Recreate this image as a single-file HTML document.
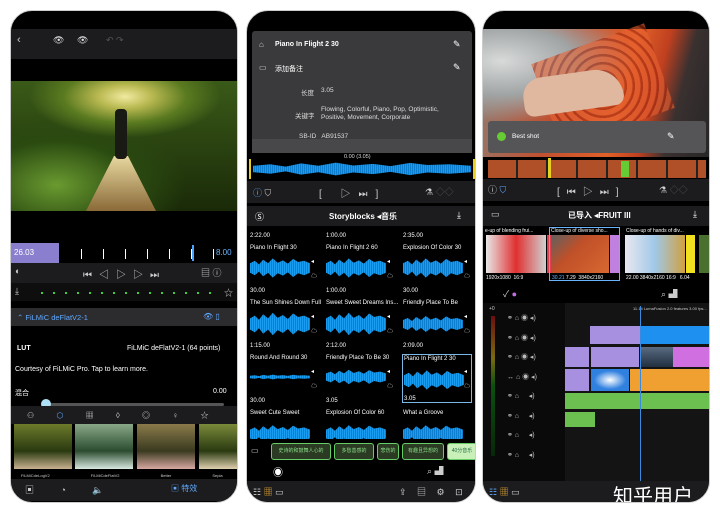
<!DOCTYPE html>
<html><head><meta charset="utf-8"><style>
*{margin:0;padding:0;box-sizing:border-box}
body{width:720px;height:513px;background:#fff;position:relative;overflow:hidden;font-family:"Liberation Sans","Noto Sans CJK SC",sans-serif;color:#fff}
.a{position:absolute}
.ph{position:absolute;top:10px;height:493px;background:#000;border-radius:22px;overflow:hidden;border:1px solid #ccc}
.t{font-size:6px;white-space:nowrap}
.wf{position:absolute;background:repeating-linear-gradient(90deg,#1a9cf0 0 1px,#0c7fd0 1px 2px);clip-path:polygon(0 30%,8% 20%,15% 35%,22% 15%,30% 30%,38% 10%,46% 28%,55% 18%,63% 32%,72% 12%,80% 25%,90% 20%,100% 30%,100% 70%,90% 80%,80% 72%,72% 88%,63% 68%,55% 82%,46% 72%,38% 90%,30% 70%,22% 85%,15% 65%,8% 80%,0 70%)}
.tag{position:absolute;top:432px;height:17px;border:1px solid #6c6;border-radius:3px;background:#2b3a22;color:#8d8;font-size:5px;text-align:center;line-height:15px}
</style></head><body>

<!-- PHONE 1 -->
<div class="ph" style="left:10px;width:228px">
 <div class="a" style="left:0;top:18px;width:228px;height:30px;background:#1c1c1e"></div>
 <div class="a t" style="left:6px;top:23px;font-size:11px;color:#ccc">‹</div>
 <div class="a t" style="left:42px;top:24px;font-size:9px;color:#ddd">👁</div>
 <div class="a t" style="left:66px;top:24px;font-size:9px;color:#ddd">👁</div>
 <div class="a t" style="left:95px;top:24px;font-size:9px;color:#555">↶ ↷</div>
 <div class="a" style="left:0;top:70px;width:228px;height:130px;background:radial-gradient(ellipse 60% 45% at 50% 12%,#f0eaa0 0,#b8b850 20%,#5a7a20 45%,transparent 70%),radial-gradient(ellipse at 20% 80%,#6a9a30 0,#2a4a10 30%,transparent 50%),linear-gradient(#3a5a18,#1a2a08)"></div>
 <div class="a" style="left:75px;top:145px;width:70px;height:55px;background:linear-gradient(#e8d8a0,#8a6a38);clip-path:polygon(40% 0,60% 0,100% 100%,0 100%)"></div>
 <div class="a" style="left:104px;top:98px;width:12px;height:50px;background:#1a1a14;border-radius:4px"></div>
 <div class="a" style="left:0;top:232px;width:48px;height:20px;background:#8a7fcf"></div>
 <div class="a t" style="left:3px;top:237px;font-size:8px;color:#fff">26.03</div>
 <div class="a" style="left:70px;top:238px;width:150px;height:10px;background:repeating-linear-gradient(90deg,#fff 0 1px,transparent 1px 22px)"></div>
 <div class="a" style="left:181px;top:234px;width:2px;height:16px;background:#4aa3ff"></div>
 <div class="a t" style="left:205px;top:237px;font-size:8px;color:#6ab4ff">8.00</div>
 <div class="a" style="left:0;top:252px;width:228px;height:20px;background:#1c1c1e"></div>
 <div class="a t" style="left:4px;top:255px;font-size:9px;color:#ccc">◐</div>
 <div class="a t" style="left:72px;top:255px;font-size:10px;color:#ccc;letter-spacing:7px">⏮◁▷▷⏭</div>
 <div class="a t" style="left:190px;top:255px;font-size:9px;color:#ccc">▤ ⓘ</div>
 <div class="a" style="left:0;top:272px;width:228px;height:18px;background:#0e0e0e"></div>
 <div class="a t" style="left:4px;top:275px;font-size:9px;color:#ccc">⤓</div>
 <div class="a" style="left:30px;top:281px;width:180px;height:2px;background:repeating-linear-gradient(90deg,#4c4 0 2px,transparent 2px 12px)"></div>
 <div class="a t" style="left:213px;top:275px;font-size:9px;color:#ccc">☆</div>
 <div class="a" style="left:0;top:297px;width:228px;height:18px;background:#2c2c2e"></div>
 <div class="a t" style="left:6px;top:302px;font-size:7.5px;color:#5fa8ff">⌃ FiLMiC deFlatV2-1</div>
 <div class="a t" style="left:192px;top:301px;font-size:8px;color:#5fa8ff">👁 ▯</div>
 <div class="a t" style="left:6px;top:334px;font-size:7px;font-weight:bold">LUT</div>
 <div class="a t" style="left:116px;top:334px;font-size:7px">FiLMiC deFlatV2-1 (64 points)</div>
 <div class="a t" style="left:4px;top:355px;font-size:7px">Courtesy of FiLMiC Pro. Tap to learn more.</div>
 <div class="a t" style="left:4px;top:377px;font-size:7px">混合</div>
 <div class="a t" style="left:202px;top:377px;font-size:7px">0.00</div>
 <div class="a" style="left:35px;top:392px;width:178px;height:3px;background:#555;border-radius:2px"></div>
 <div class="a" style="left:30px;top:388px;width:10px;height:10px;background:#aee0f5;border-radius:50%"></div>
 <div class="a" style="left:0;top:395px;width:228px;height:18px;background:#1c1c1e"></div>
 <div class="a t" style="left:16px;top:399px;font-size:8px;color:#ccc;word-spacing:20px">⚇ <span style="color:#5fa8ff">⬡</span> ▦ ◊ ◎ ♀ ☆</div>
 <div class="a" style="left:3px;top:413px;width:58px;height:45px;background:linear-gradient(#6c7a2a,#2a3a10 60%,#c8b090)"></div>
 <div class="a" style="left:64px;top:413px;width:58px;height:45px;background:linear-gradient(#88a888,#2c4c30 60%,#d8e8e0)"></div>
 <div class="a" style="left:126px;top:413px;width:58px;height:45px;background:linear-gradient(#8a7a4a,#3a3a20 60%,#d8a8a0)"></div>
 <div class="a" style="left:188px;top:413px;width:40px;height:45px;background:linear-gradient(#7a8a3a,#2a3a10 60%,#e0d0b0)"></div>
 <div class="a t" style="left:10px;top:462px;font-size:4px;color:#ccc;word-spacing:40px">FiLMiCdeLogV2 FiLMiCdeFlatV2 Better&nbsp;Sepia Color&nbsp;Punch</div>
 <div class="a" style="left:0;top:468px;width:228px;height:22px;background:#1c1c1e"></div>
 <div class="a t" style="left:14px;top:472px;font-size:9px;color:#ccc;word-spacing:24px">▣ ◔ 🔈</div>
 <div class="a t" style="left:160px;top:472px;font-size:8px;color:#5fa8ff">▣ 特效</div>
</div>

<!-- PHONE 2 -->
<div class="ph" style="left:246px;width:230px">
 <div class="a" style="left:5px;top:20px;width:220px;height:122px;background:#3a3a3c;border-radius:3px"></div>
 <div class="a t" style="left:12px;top:29px;font-size:8px;color:#ccc">⌂</div>
 <div class="a t" style="left:28px;top:30px;font-size:7px;font-weight:bold">Piano In Flight 2 30</div>
 <div class="a t" style="left:206px;top:28px;font-size:9px">✎</div>
 <div class="a t" style="left:12px;top:52px;font-size:8px;color:#ccc">▭</div>
 <div class="a t" style="left:28px;top:53px;font-size:7px">添加备注</div>
 <div class="a t" style="left:206px;top:51px;font-size:9px">✎</div>
 <div class="a t" style="left:54px;top:76px;font-size:6.5px;color:#ddd">长度</div>
 <div class="a t" style="left:74px;top:76px;font-size:6.5px;color:#ddd">3.05</div>
 <div class="a t" style="left:48px;top:99px;font-size:6.5px;color:#ddd">关键字</div>
 <div class="a t" style="left:74px;top:95px;font-size:6.5px;color:#ddd;line-height:8px">Flowing, Colorful, Piano, Pop, Optimistic,<br>Positive, Movement, Corporate</div>
 <div class="a t" style="left:52px;top:122px;font-size:6.5px;color:#ddd">SB-ID&nbsp;&nbsp; AB91537</div>
 <div class="a" style="left:5px;top:128px;width:220px;height:14px;background:#48484a"></div>
 <div class="a t" style="left:97px;top:143px;font-size:5.5px;color:#ddd">0.00 (3.05)</div>
 <div class="a" style="left:2px;top:148px;width:226px;height:20px;border:2px solid #e8d020;border-top:none;border-bottom:none"></div>
 <div class="a wf" style="left:6px;top:150px;width:218px;height:16px"></div>
 <div class="a" style="left:0;top:170px;width:230px;height:22px;background:#1c1c1e"></div>
 <div class="a t" style="left:6px;top:175px;font-size:9px;color:#5fa8ff">ⓘ <span style="color:#ccc">⛉</span></div>
 <div class="a t" style="left:72px;top:174px;font-size:10px;color:#ccc;letter-spacing:8px">[ ▷⏭]</div>
 <div class="a t" style="left:178px;top:174px;font-size:9px;color:#ccc">⚗ <span style="color:#555">◇◇</span></div>
 <div class="a" style="left:0;top:195px;width:230px;height:20px;background:#1c1c1e"></div>
 <div class="a t" style="left:8px;top:199px;font-size:9px">Ⓢ</div>
 <div class="a t" style="left:82px;top:200px;font-size:8px;font-weight:bold">Storyblocks ◂音乐</div>
 <div class="a t" style="left:210px;top:199px;font-size:9px">⤓</div>

 <div class="a" style="left:0;top:217px;width:230px;height:212px">
  <div class="a t" style="left:3px;top:5px">2:22.00</div><div class="a t" style="left:3px;top:17px">Piano In Flight 30</div>
  <div class="a wf" style="left:3px;top:28px;width:60px;height:24px"></div><div class="a t" style="left:64px;top:30px;font-size:6px">◂<br><br>☁</div>
  <div class="a t" style="left:79px;top:5px">1:00.00</div><div class="a t" style="left:79px;top:17px">Piano In Flight 2 60</div>
  <div class="a wf" style="left:79px;top:28px;width:60px;height:24px"></div><div class="a t" style="left:140px;top:30px;font-size:6px">◂<br><br>☁</div>
  <div class="a t" style="left:156px;top:5px">2:35.00</div><div class="a t" style="left:156px;top:17px">Explosion Of Color 30</div>
  <div class="a wf" style="left:156px;top:28px;width:60px;height:24px"></div><div class="a t" style="left:217px;top:30px;font-size:6px">◂<br><br>☁</div>

  <div class="a t" style="left:3px;top:60px">30.00</div><div class="a t" style="left:3px;top:72px">The Sun Shines Down Full</div>
  <div class="a wf" style="left:3px;top:82px;width:60px;height:28px"></div><div class="a t" style="left:64px;top:85px;font-size:6px">◂<br><br>☁</div>
  <div class="a t" style="left:79px;top:60px">1:00.00</div><div class="a t" style="left:79px;top:72px">Sweet Sweet Dreams Ins...</div>
  <div class="a wf" style="left:79px;top:82px;width:60px;height:28px"></div><div class="a t" style="left:140px;top:85px;font-size:6px">◂<br><br>☁</div>
  <div class="a t" style="left:156px;top:60px">30.00</div><div class="a t" style="left:156px;top:72px">Friendly Place To Be</div>
  <div class="a wf" style="left:156px;top:86px;width:60px;height:20px"></div><div class="a t" style="left:217px;top:85px;font-size:6px">◂<br><br>☁</div>

  <div class="a t" style="left:3px;top:115px">1:15.00</div><div class="a t" style="left:3px;top:127px">Round And Round 30</div>
  <div class="a wf" style="left:3px;top:146px;width:60px;height:6px"></div><div class="a t" style="left:64px;top:140px;font-size:6px">◂<br><br>☁</div>
  <div class="a t" style="left:79px;top:115px">2:12.00</div><div class="a t" style="left:79px;top:127px">Friendly Place To Be 30</div>
  <div class="a wf" style="left:79px;top:140px;width:60px;height:18px"></div><div class="a t" style="left:140px;top:140px;font-size:6px">◂<br><br>☁</div>
  <div class="a t" style="left:156px;top:115px">2:09.00</div>
  <div class="a" style="left:155px;top:126px;width:70px;height:49px;border:1px solid #7ab8e8"></div>
  <div class="a t" style="left:157px;top:128px">Piano In Flight 2 30</div>
  <div class="a wf" style="left:157px;top:140px;width:60px;height:24px"></div><div class="a t" style="left:217px;top:140px;font-size:6px">◂<br><br>☁</div>
  <div class="a t" style="left:157px;top:168px">3.05</div>

  <div class="a t" style="left:3px;top:170px">30.00</div><div class="a t" style="left:3px;top:182px">Sweet Cute Sweet</div>
  <div class="a wf" style="left:3px;top:195px;width:60px;height:22px"></div>
  <div class="a t" style="left:79px;top:170px">3.05</div><div class="a t" style="left:79px;top:182px">Explosion Of Color 60</div>
  <div class="a wf" style="left:79px;top:195px;width:60px;height:22px"></div>
  <div class="a t" style="left:156px;top:182px">What a Groove</div>
  <div class="a wf" style="left:156px;top:195px;width:60px;height:22px"></div>
 </div>
 <div class="a" style="left:0;top:428px;width:230px;height:62px;background:#000"></div>
 <div class="a t" style="left:4px;top:435px;font-size:8px;color:#ccc">▭</div>
 <div class="tag" style="left:24px;width:60px">史诗的和鼓舞人心的</div>
 <div class="tag" style="left:87px;width:40px">多愁善感的</div>
 <div class="tag" style="left:130px;width:22px">悲伤的</div>
 <div class="tag" style="left:155px;width:42px">有趣且异想的</div>
 <div class="tag" style="left:200px;width:30px;background:#c8f0b8;color:#264">40分音乐</div>
 <div class="a t" style="left:26px;top:453px;font-size:10px">◉</div>
 <div class="a t" style="left:180px;top:453px;font-size:9px;color:#ccc">⌕ ▟</div>
 <div class="a" style="left:0;top:470px;width:230px;height:22px;background:#1c1c1e"></div>
 <div class="a t" style="left:6px;top:474px;font-size:9px;color:#ccc">☷ <span style="color:#d9a030">▦</span> ▭</div>
 <div class="a t" style="left:152px;top:474px;font-size:9px;color:#ccc;word-spacing:8px">⇪ ▤ ⚙ ⊡</div>
</div>

<!-- PHONE 3 -->
<div class="ph" style="left:482px;width:228px">
 <div class="a" style="left:0;top:18px;width:228px;height:128px;background:radial-gradient(ellipse at 8% 25%,#d8dada 0,#a0a4a4 25%,transparent 45%),linear-gradient(105deg,#8a8078 0,#c05030 35%,#e06028 60%,#c04020 72%,#3a3030 82%,#262626 100%)"></div>
 <div class="a" style="left:60px;top:30px;width:120px;height:90px;background:repeating-radial-gradient(circle at 50% 50%,#e86030 0 5px,#a02810 6px 8px);opacity:.6;transform:rotate(-20deg)"></div>
 <div class="a" style="left:40px;top:62px;width:100px;height:38px;background:#e0b8a0;border-radius:20px 30px 10px 10px;transform:rotate(-8deg)"></div>
 <div class="a" style="left:5px;top:110px;width:218px;height:32px;background:#555557;border-radius:3px"></div>
 <div class="a" style="left:14px;top:121px;width:9px;height:9px;border-radius:50%;background:#6c3"></div>
 <div class="a t" style="left:29px;top:122px;font-size:6.5px">Best shot</div>
 <div class="a t" style="left:184px;top:120px;font-size:9px">✎</div>
 <div class="a" style="left:5px;top:149px;width:218px;height:18px;background:repeating-linear-gradient(90deg,#b05028 0 28px,#222 28px 30px)"></div>
 <div class="a" style="left:65px;top:147px;width:3px;height:20px;background:#e8d020"></div>
 <div class="a" style="left:138px;top:150px;width:8px;height:16px;background:#6c3"></div>
 <div class="a" style="left:0;top:168px;width:228px;height:22px;background:#1c1c1e"></div>
 <div class="a t" style="left:5px;top:172px;font-size:9px;color:#ccc">ⓘ <span style="color:#5fa8ff">⛉</span></div>
 <div class="a t" style="left:74px;top:172px;font-size:10px;color:#ccc;letter-spacing:7px">[⏮▷⏭]</div>
 <div class="a t" style="left:176px;top:172px;font-size:9px;color:#ccc">⚗ <span style="color:#555">◇◇</span></div>
 <div class="a" style="left:0;top:195px;width:228px;height:20px;background:#1c1c1e"></div>
 <div class="a t" style="left:8px;top:198px;font-size:9px;color:#ccc">▭</div>
 <div class="a t" style="left:85px;top:199px;font-size:8px;font-weight:bold">已导入 ◂FRUIT III</div>
 <div class="a t" style="left:210px;top:198px;font-size:9px">⤓</div>
 <div class="a t" style="left:2px;top:217px;font-size:5px">e-up of blending frui...</div>
 <div class="a" style="left:3px;top:224px;width:60px;height:38px;background:linear-gradient(90deg,#e8e8e8,#e03030 50%,#d0d0d0)"></div>
 <div class="a" style="left:64px;top:224px;width:9px;height:38px;background:#e04050"></div>
 <div class="a" style="left:66px;top:216px;width:71px;height:54px;border:1px solid #6ab4ff"></div>
 <div class="a t" style="left:68px;top:217px;font-size:5px">Close-up of diverse sho...</div>
 <div class="a" style="left:68px;top:224px;width:58px;height:38px;background:linear-gradient(135deg,#606060,#c05028 40%,#d86830)"></div>
 <div class="a" style="left:127px;top:224px;width:9px;height:38px;background:#c080e0"></div>
 <div class="a t" style="left:143px;top:217px;font-size:5px">Close-up of hands of div...</div>
 <div class="a" style="left:142px;top:224px;width:60px;height:38px;background:linear-gradient(90deg,#e8e8f0,#a0c8e8 50%,#d0a040)"></div>
 <div class="a" style="left:203px;top:224px;width:9px;height:38px;background:#f0e020"></div>
 <div class="a" style="left:216px;top:224px;width:12px;height:38px;background:#4a7030"></div>
 <div class="a t" style="left:3px;top:264px;font-size:5px">1920x1080&nbsp; 16:9</div>
 <div class="a t" style="left:69px;top:264px;font-size:5px"><span style="color:#6ab4ff">30.21</span> 7.29 &nbsp;3840x2160</div>
 <div class="a t" style="left:143px;top:264px;font-size:5px">22.00 3840x2160 16:9 &nbsp;&nbsp;6.04</div>
 <div class="a t" style="left:20px;top:276px;font-size:9px;color:#ccc">✓ <span style="color:#c070e0">●</span></div>
 <div class="a t" style="left:178px;top:276px;font-size:9px;color:#ccc">⌕ ▟</div>
 <div class="a" style="left:0;top:292px;width:228px;height:178px;background:#141414"></div>
 <div class="a" style="left:0;top:292px;width:82px;height:178px;background:#0a0a0a"></div>
 <div class="a" style="left:8px;top:305px;width:4px;height:140px;background:linear-gradient(#6a1010,#7a6a10 30%,#0c5010 50%,#082808)"></div>
 <div class="a t" style="left:6px;top:295px;font-size:5px;color:#ccc">+0</div>
 <div class="a t" style="left:24px;top:298px;font-size:7px;color:#bbb;line-height:19.5px">⚭ ⌂ ◉ ◂)<br>⚭ ⌂ ◉ ◂)<br>⚭ ⌂ ◉ ◂)<br>↔ ⌂ ◉ ◂)<br>⚭ ⌂ &nbsp;&nbsp;&nbsp; ◂)<br>⚭ ⌂ &nbsp;&nbsp;&nbsp; ◂)<br>⚭ ⌂ &nbsp;&nbsp;&nbsp; ◂)<br>⚭ ⌂ &nbsp;&nbsp;&nbsp; ◂)</div>
 <div class="a t" style="left:150px;top:295px;font-size:4px;color:#ccc">11.14 LumaFusion 2.0 features 3.00 fps...</div>
 <div class="a" style="left:107px;top:315px;width:50px;height:18px;background:#a890e0"></div>
 <div class="a" style="left:157px;top:315px;width:71px;height:18px;background:#1e90f0"></div>
 <div class="a" style="left:82px;top:336px;width:24px;height:20px;background:#a890e0"></div>
 <div class="a" style="left:108px;top:336px;width:48px;height:20px;background:#a890e0"></div>
 <div class="a" style="left:157px;top:336px;width:33px;height:20px;background:linear-gradient(#5a6a80,#203040)"></div>
 <div class="a" style="left:190px;top:336px;width:38px;height:20px;background:#d070e0"></div>
 <div class="a" style="left:82px;top:358px;width:24px;height:22px;background:#a890e0"></div>
 <div class="a" style="left:108px;top:358px;width:38px;height:22px;background:radial-gradient(#fff,#3080e0 60%)"></div>
 <div class="a" style="left:147px;top:358px;width:81px;height:22px;background:#f0a030"></div>
 <div class="a" style="left:82px;top:382px;width:146px;height:16px;background:#6cc050"></div>
 <div class="a" style="left:82px;top:401px;width:30px;height:15px;background:#6cc050"></div>
 <div class="a" style="left:157px;top:295px;width:1px;height:175px;background:#3a8ae0"></div>
 <div class="a" style="left:0;top:470px;width:228px;height:22px;background:#1c1c1e"></div>
 <div class="a t" style="left:6px;top:474px;font-size:9px;color:#5fa8ff">☷ <span style="color:#d9a030">▦</span> <span style="color:#ccc">▭</span></div>
 <div class="a t" style="left:130px;top:469px;font-size:20px;color:#fff;font-family:'Noto Sans CJK SC',sans-serif">知乎用户</div>
</div>
</body></html>
